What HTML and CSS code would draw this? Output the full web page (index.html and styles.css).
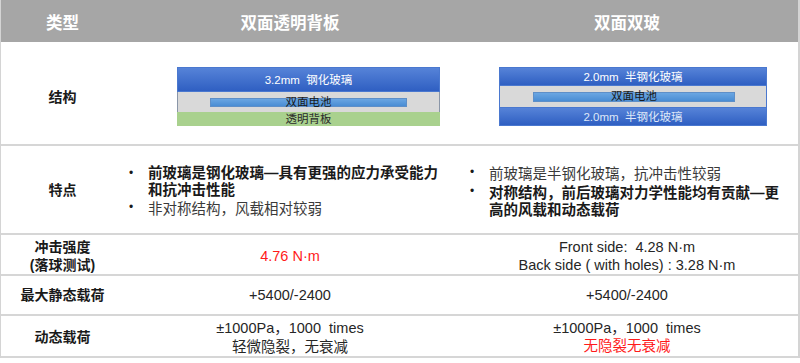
FILE: index.html
```html
<!DOCTYPE html>
<html lang="zh-CN">
<head>
<meta charset="utf-8">
<title>双面透明背板 vs 双面双玻</title>
<link rel="stylesheet" href="styles.css">
</head>
<body>
<div class="table">
  <div class="row head">
    <div class="c c1">类型</div>
    <div class="c c2">双面透明背板</div>
    <div class="c c3">双面双玻</div>
  </div>

  <div class="row r-struct">
    <div class="c c1 label struct-label">结构</div>
    <div class="c c2 diag-cell diag-left">
      <div class="stack stack-left">
        <div class="layer glass glass-thick">3.2mm&nbsp; 钢化玻璃</div>
        <div class="layer cell-layer cell-left"><div class="bar">双面电池</div></div>
        <div class="layer backsheet">透明背板</div>
      </div>
    </div>
    <div class="c c3 diag-cell diag-right">
      <div class="stack stack-right">
        <div class="layer glass glass-thin">2.0mm&nbsp; 半钢化玻璃</div>
        <div class="layer cell-layer cell-right"><div class="bar">双面电池</div></div>
        <div class="layer glass glass-thin glass-back">2.0mm&nbsp; 半钢化玻璃</div>
      </div>
    </div>
  </div>

  <div class="row r-feat">
    <div class="c c1 label">特点</div>
    <div class="c c2 feat-cell feat-left">
      <ul class="bullets">
        <li><span class="dot">•</span><span class="txt strong">前玻璃是钢化玻璃—具有更强的应力承受能力<br>和抗冲击性能</span></li>
        <li><span class="dot">•</span><span class="txt">非对称结构<span class="p">，</span>风载相对较弱</span></li>
      </ul>
    </div>
    <div class="c c3 feat-cell feat-right">
      <ul class="bullets">
        <li><span class="dot">•</span><span class="txt">前玻璃是半钢化玻璃<span class="p">，</span>抗冲击性较弱</span></li>
        <li><span class="dot">•</span><span class="txt strong">对称结构<span class="p">，</span>前后玻璃对力学性能均有贡献—更<br>高的风载和动态载荷</span></li>
      </ul>
    </div>
  </div>

  <div class="row r-impact">
    <div class="c c1 label"><div>冲击强度<br>(落球测试)</div></div>
    <div class="c c2 val red">4.76 N·m</div>
    <div class="c c3 val"><div>Front side:&nbsp; 4.28 N·m<br>Back side ( with holes) : 3.28 N·m</div></div>
  </div>

  <div class="row r-static">
    <div class="c c1 label">最大静态载荷</div>
    <div class="c c2 val">+5400/-2400</div>
    <div class="c c3 val">+5400/-2400</div>
  </div>

  <div class="row r-dyn">
    <div class="c c1 label">动态载荷</div>
    <div class="c c2 val"><div>±1000Pa<span class="p">，</span>1000&nbsp; times<br>轻微隐裂<span class="p">，</span>无衰减</div></div>
    <div class="c c3 val"><div>±1000Pa<span class="p">，</span>1000&nbsp; times<br><span class="red">无隐裂无衰减</span></div></div>
  </div>
</div>
</body>
</html>
```

FILE: styles.css
```css
* { box-sizing: border-box; }

html, body {
  margin: 0;
  padding: 0;
  background: #ffffff;
}

body {
  font-family: "Liberation Sans", "Noto Sans CJK SC", Arial, sans-serif;
  color: #1f1f1f;
  width: 800px;
  height: 363px;
  overflow: hidden;
}

.table {
  width: 800px;
  border-left: 1px solid #d4d4d4;
  border-right: 2px solid #d4d4d4;
}

.row {
  display: grid;
  grid-template-columns: 123px 332px 1fr;
  border-bottom: 2px solid #d6d6d6;
}

.c {
  display: flex;
  align-items: center;
  justify-content: center;
  text-align: center;
}

/* centred full-width punctuation, as in the source deck */
.p { font-family: "Noto Sans CJK TC", "Noto Sans CJK SC", sans-serif; }

/* header */
.head {
  height: 42px;
  background: #a6a6a6;
  border-bottom: 0;
  color: #ffffff;
  font-weight: bold;
  font-size: 16.5px;
}

.head .c { padding-top: 1px; }

.label {
  font-weight: bold;
  font-size: 14px;
  color: #1a1a1a;
  line-height: 18px;
}

/* structure */
.r-struct { height: 104px; }

.struct-label { padding-top: 8px; }

.diag-cell {
  justify-content: flex-start;
  align-items: flex-start;
  padding-top: 25px;
}

.diag-left { padding-left: 53px; }
.diag-right { padding-left: 43px; }

.stack {
  display: flex;
  flex-direction: column;
}

.stack-left { width: 263px; }
.stack-right { width: 268px; }

.layer {
  display: flex;
  align-items: center;
  justify-content: center;
  font-size: 11px;
  line-height: 12px;
}

.glass {
  background: linear-gradient(#5683d8, #2f5fc2);
  color: #ffffff;
  border: 1px solid #4a78cf;
}

.glass-thick { height: 25px; font-size: 11.5px; }
.glass-thin { height: 19px; font-size: 11.5px; }
.glass-back { color: #dfe8f8; }

.cell-layer {
  background: #d9d9d9;
  border: 1px solid #8a96a8;
  border-top: 0;
  border-bottom: 0;
}

.cell-left { height: 20px; padding: 0 32px; }
.cell-right {
  height: 21px;
  padding: 0 31px 0 33px;
  border-left: 1px solid #4a78cf;
  border-right: 1px solid #4a78cf;
}

.bar {
  width: 100%;
  height: 9px;
  background: linear-gradient(#6aa6e2, #4a8dd4);
  border: 1px solid #5e8fc8;
  color: #1a1a1a;
  font-size: 11.5px;
  line-height: 7px;
  display: flex;
  align-items: center;
  justify-content: center;
  white-space: nowrap;
}

.cell-right .bar { height: 10px; }

.backsheet {
  height: 14px;
  background: #a9d18e;
  color: #2a2a2a;
  font-size: 11.5px;
}

/* features */
.r-feat { height: 89px; }

.feat-cell {
  justify-content: flex-start;
  text-align: left;
  padding-top: 3px;
}

.feat-left { padding-left: 5px; }
.feat-right { padding-left: 14px; }

.bullets {
  list-style: none;
  margin: 0;
  padding: 0;
  font-size: 14.5px;
  line-height: 17px;
  color: #3a3a3a;
}

.bullets li {
  display: flex;
}

.dot {
  width: 19px;
  flex: none;
  font-size: 12px;
  color: #1a1a1a;
}

.txt { white-space: nowrap; }

.strong {
  font-weight: bold;
  color: #1a1a1a;
}

/* values */
.val {
  font-size: 14.5px;
  line-height: 18px;
  color: #262626;
}

.red { color: #ff1a1a; }

.r-impact { height: 41px; }
.r-impact .c { padding-top: 2px; }
.r-static { height: 40px; }
.r-dyn { height: 42px; }
.r-dyn .c { padding-top: 1px; }
```
